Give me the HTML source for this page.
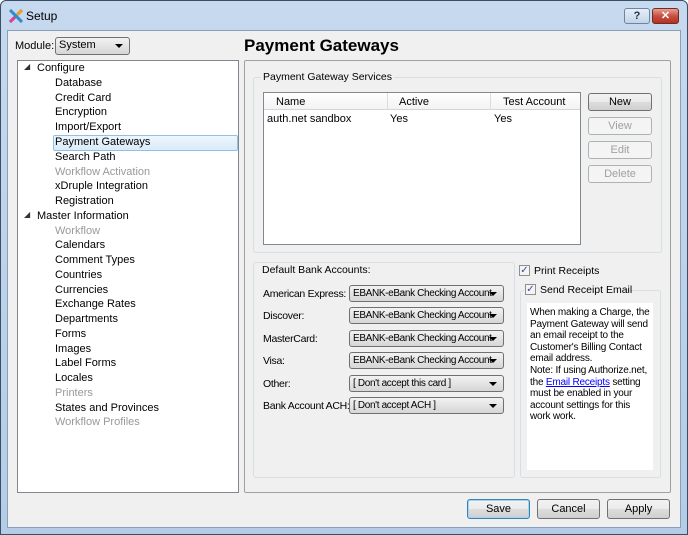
<!DOCTYPE html><html><head><style>
*{box-sizing:border-box}body{margin:0;width:688px;height:535px;overflow:hidden;font-family:"Liberation Sans",sans-serif;font-size:11px;color:#000;background:#fff}
.a{position:absolute;white-space:nowrap}
.win{left:0;top:0;width:688px;height:535px;background:linear-gradient(#c6d9ee,#b4cce6);border:1px solid #3a4f66;border-radius:6px 6px 0 0}
.client{left:7px;top:30px;width:674px;height:498px;background:#f0f0f0;border:1px solid #8aa0b8}
.box{background:#fff;border:1px solid #828790}
.grp{border:1px solid #d5dfe5;border-radius:3px}
.btn{border:1px solid #707070;border-radius:3px;background:linear-gradient(#f2f2f2,#ebebeb 50%,#dddddd 51%,#cfcfcf);text-align:center;line-height:16px}
.dis{color:#a0a0a0;border-color:#adb2b5;background:#f4f4f4}
.cb{border:1px solid #707070;border-radius:3px;background:linear-gradient(#f2f2f2,#e4e4e4 50%,#d6d6d6);padding-left:3px;line-height:15px;height:17px;overflow:hidden;font-size:10px;letter-spacing:-0.35px}
.cb:after{content:"";position:absolute;right:6px;top:6px;border:4px solid transparent;border-top:4px solid #000}
.t div{position:absolute;left:0;white-space:nowrap}
.chk{width:11px;height:11px;border:1px solid #8e8f8f;background:#f4f4f4;font-size:10px;line-height:9px;text-align:center;color:#3c4c8c}
</style></head><body>
<div class="a win"></div>
<svg class="a" style="left:9px;top:9px" width="14" height="14"><path d="M1 1L13 13M13 1L1 13" stroke="#2a8ed0" stroke-width="3"/><path d="M1 13L6 8" stroke="#e04090" stroke-width="3"/><path d="M13 1L8 6" stroke="#f0a020" stroke-width="3"/></svg>
<div class="a" style="left:26px;top:9px;font-size:12px">Setup</div>
<div class="a" style="left:624px;top:8px;width:26px;height:16px;border:1px solid #6d84a0;border-radius:3px;background:linear-gradient(#e6eef8,#c3d3e6);text-align:center;font-weight:bold;color:#234;line-height:14px">?</div>
<div class="a" style="left:652px;top:8px;width:27px;height:16px;border:1px solid #6b2c2c;border-radius:3px;background:linear-gradient(#e8a090,#c75040 50%,#b53020);text-align:center;font-weight:bold;color:#fff;line-height:14px">✕</div>
<div class="a client"></div>
<div class="a" style="left:15px;top:40px">Module:</div>
<div class="a cb" style="left:55px;top:37px;width:75px;height:18px;font-size:11px;letter-spacing:0">System</div>
<div class="a" style="left:244px;top:36px;font-size:17px;font-weight:bold">Payment Gateways</div>
<div class="a box" style="left:17px;top:60px;width:222px;height:433px"></div>
<div class="a" style="left:53px;top:135px;width:185px;height:16px;background:linear-gradient(#eef6fd,#d9ebf9);border:1px solid #8fc0ea;border-radius:2px"></div>
<div class="a t" style="left:0;top:62px">
<div style="left:24px;top:0;font-size:8px;color:#333">◢</div><div style="left:37px;top:0">Configure</div>
<div style="left:55px;top:15px">Database</div><div style="left:55px;top:30px">Credit Card</div><div style="left:55px;top:44px">Encryption</div><div style="left:55px;top:59px">Import/Export</div><div style="left:55px;top:74px">Payment Gateways</div><div style="left:55px;top:89px">Search Path</div><div style="left:55px;top:104px;color:#999">Workflow Activation</div><div style="left:55px;top:118px">xDruple Integration</div><div style="left:55px;top:133px">Registration</div>
<div style="left:24px;top:148px;font-size:8px;color:#333">◢</div><div style="left:37px;top:148px">Master Information</div>
<div style="left:55px;top:163px;color:#999">Workflow</div><div style="left:55px;top:177px">Calendars</div><div style="left:55px;top:192px">Comment Types</div><div style="left:55px;top:207px">Countries</div><div style="left:55px;top:222px">Currencies</div><div style="left:55px;top:236px">Exchange Rates</div><div style="left:55px;top:251px">Departments</div><div style="left:55px;top:266px">Forms</div><div style="left:55px;top:281px">Images</div><div style="left:55px;top:295px">Label Forms</div><div style="left:55px;top:310px">Locales</div><div style="left:55px;top:325px;color:#999">Printers</div><div style="left:55px;top:340px">States and Provinces</div><div style="left:55px;top:354px;color:#999">Workflow Profiles</div>
</div>
<div class="a" style="left:244px;top:60px;width:427px;height:433px;border:1px solid #a0a0a0;border-radius:2px"></div>
<div class="a grp" style="left:253px;top:77px;width:409px;height:176px"></div>
<div class="a" style="left:261px;top:71px;background:#f0f0f0;padding:0 2px;font-size:10.5px">Payment Gateway Services</div>
<div class="a box" style="left:263px;top:92px;width:318px;height:153px"></div>
<div class="a" style="left:264px;top:93px;width:316px;height:17px;border-bottom:1px solid #d5d5d5;background:linear-gradient(#fff,#f3f3f3)"></div>
<div class="a" style="left:387px;top:93px;width:1px;height:17px;background:#ddd"></div>
<div class="a" style="left:490px;top:93px;width:1px;height:17px;background:#ddd"></div>
<div class="a t" style="left:0;top:96px"><div style="left:276px">Name</div><div style="left:399px">Active</div><div style="left:503px">Test Account</div>
<div style="left:267px;top:17px">auth.net sandbox</div><div style="left:390px;top:17px">Yes</div><div style="left:494px;top:17px">Yes</div></div>
<div class="a btn" style="left:588px;top:93px;width:64px;height:18px">New</div>
<div class="a btn dis" style="left:588px;top:117px;width:64px;height:18px">View</div>
<div class="a btn dis" style="left:588px;top:141px;width:64px;height:18px">Edit</div>
<div class="a btn dis" style="left:588px;top:165px;width:64px;height:18px">Delete</div>
<div class="a grp" style="left:253px;top:262px;width:262px;height:216px"></div>
<div class="a" style="left:260px;top:264px;background:#f0f0f0;padding:0 2px;font-size:10.5px">Default Bank Accounts:</div>
<div class="a t" style="left:0;top:288px;font-size:10.5px;letter-spacing:-0.3px"><div style="left:263px">American Express:</div><div style="left:263px;top:22px">Discover:</div><div style="left:263px;top:45px">MasterCard:</div><div style="left:263px;top:67px">Visa:</div><div style="left:263px;top:90px">Other:</div><div style="left:263px;top:112px">Bank Account ACH:</div></div>
<div class="a cb" style="left:349px;top:285px;width:155px">EBANK-eBank Checking Account</div>
<div class="a cb" style="left:349px;top:307px;width:155px">EBANK-eBank Checking Account</div>
<div class="a cb" style="left:349px;top:330px;width:155px">EBANK-eBank Checking Account</div>
<div class="a cb" style="left:349px;top:352px;width:155px">EBANK-eBank Checking Account</div>
<div class="a cb" style="left:349px;top:375px;width:155px">[ Don't accept this card ]</div>
<div class="a cb" style="left:349px;top:397px;width:155px">[ Don't accept ACH ]</div>
<div class="a chk" style="left:519px;top:265px">✓</div><div class="a" style="left:534px;top:265px;font-size:10.5px">Print Receipts</div>
<div class="a grp" style="left:520px;top:290px;width:141px;height:188px"></div>
<div class="a" style="left:524px;top:283px;background:#f0f0f0;width:100px;height:14px"></div>
<div class="a chk" style="left:525px;top:284px">✓</div><div class="a" style="left:540px;top:284px;font-size:10.5px">Send Receipt Email</div>
<div class="a" style="left:527px;top:303px;width:126px;height:167px;background:#fff;padding:4px 3px;line-height:11.6px;font-size:10px;letter-spacing:-0.2px;white-space:normal">When making a Charge, the Payment Gateway will send an email receipt to the Customer's Billing Contact email address.<br>Note: If using Authorize.net, the <u style="color:#00f">Email Receipts</u> setting must be enabled in your account settings for this work work.</div>
<div class="a btn" style="left:467px;top:499px;width:63px;height:20px;line-height:18px;border-color:#3c7fb1;box-shadow:inset 0 0 0 1px #9fd5f5">Save</div>
<div class="a btn" style="left:537px;top:499px;width:63px;height:20px;line-height:18px">Cancel</div>
<div class="a btn" style="left:607px;top:499px;width:63px;height:20px;line-height:18px">Apply</div>
</body></html>
